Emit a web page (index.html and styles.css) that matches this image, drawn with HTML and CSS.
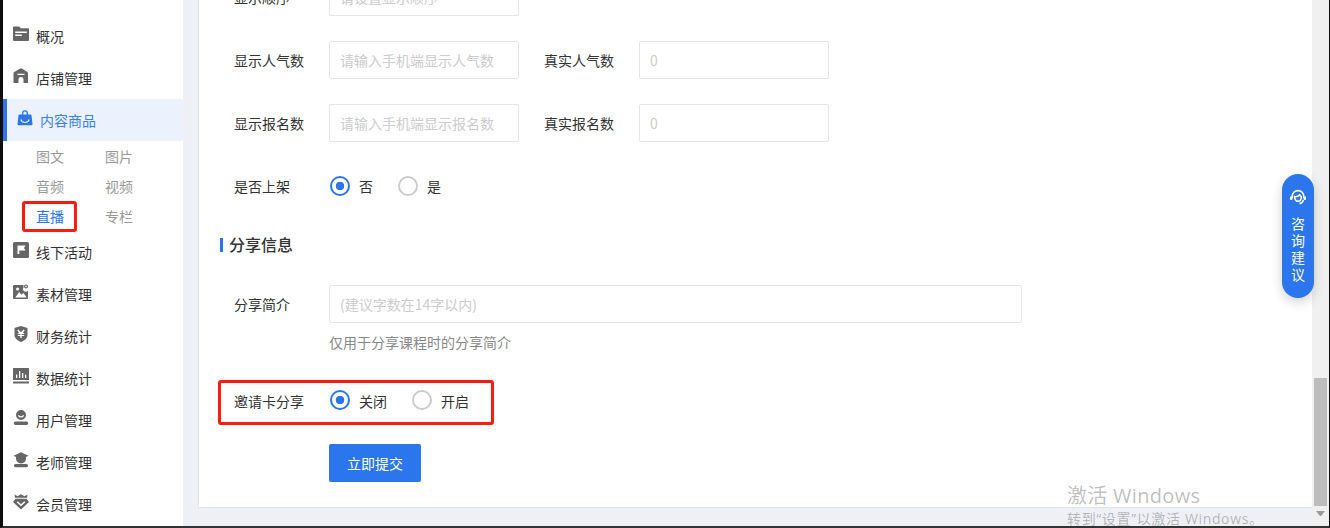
FILE: index.html
```html
<!DOCTYPE html>
<html lang="zh-CN">
<head>
<meta charset="utf-8">
<title>内容商品</title>
<link rel="stylesheet" href="styles.css">
</head>
<body>
<div class="shell">
  <nav class="sidebar">
    <a class="nav-item"><svg class="icon" viewBox="0 0 16 16"><path fill-rule="evenodd" d="M0 1.500A1 1 0 0 1 1 .5h5.200l1.600 1.800H15a1 1 0 0 1 1 1V14a1 1 0 0 1-1 1H1a1 1 0 0 1-1-1zM2.200 5.600v1.500h11.600V5.600zM2.200 8.600v1.500h6.600V8.600z"/></svg><span>概况</span></a>
    <a class="nav-item"><svg class="icon" viewBox="0 0 16 16"><path fill-rule="evenodd" d="M8 .5c1 0 1.700.5 2.500 1l3.800 2.600c.5.3.7.7.7 1.300V15h-4.500v-3.500a2.500 2.500 0 0 0-5 0V15H.5V5.400c0-.6.2-1 .7-1.300L5.500 1.500c.8-.5 1.500-1 2.500-1zM4.500 5.800v1.100h7V5.800z"/></svg><span>店铺管理</span></a>
    <a class="nav-item nav-active"><svg class="icon" viewBox="0 0 16 16"><path fill-rule="evenodd" d="M5 4.500V3.200a3 3 0 0 1 6 0v1.300h2.600c.5 0 .8.3.9.8l1 8.800c.1.6-.3 1.100-.9 1.100H1.400c-.6 0-1-.5-.9-1.100l1-8.800c.1-.5.4-.8.9-.8zM6.300 4.500h3.400V3.200a1.700 1.700 0 0 0-3.400 0zM4.400 9.300l-1.100.5a5 5 0 0 0 9.400 0l-1.100-.5a3.800 3.800 0 0 1-7.200 0z"/></svg><span>内容商品</span></a>
    <div class="sub-grid">
      <a class="sub-item">图文</a>
      <a class="sub-item">图片</a>
      <a class="sub-item">音频</a>
      <a class="sub-item">视频</a>
      <a class="sub-item sub-active">直播</a>
      <a class="sub-item">专栏</a>
    </div>
    <a class="nav-item"><svg class="icon" viewBox="0 0 16 16"><path fill-rule="evenodd" d="M1.500 0h13A1.500 1.500 0 0 1 16 1.500v13a1.500 1.500 0 0 1-1.500 1.500h-13A1.500 1.500 0 0 1 0 14.500v-13A1.500 1.500 0 0 1 1.500 0zM4.500 3.500V12H6.300V8.500h6.200l-1.500-2.500 1.500-2.500z"/></svg><span>线下活动</span></a>
    <a class="nav-item"><svg class="icon" viewBox="0 0 16 16"><path fill-rule="evenodd" d="M1 1h9.500v2.500a2.700 2.700 0 0 0 4.500 3V15H1a1 1 0 0 1-1-1V2a1 1 0 0 1 1-1zM2.200 13.500h11.500l-3.200-4.600-2.300 1.800-2-2.600zM4.600 3.400a1.500 1.500 0 1 0 0 3 1.500 1.500 0 0 0 0-3zM13 .4a2 2 0 1 1 0 4 2 2 0 0 1 0-4zm0 1.200a.8.8 0 1 0 0 1.600.8.8 0 0 0 0-1.600z"/></svg><span>素材管理</span></a>
    <a class="nav-item"><svg class="icon" viewBox="0 0 16 16"><path fill-rule="evenodd" d="M8 0l6.500 2v7.200c0 3-3 5.300-6.500 6.800-3.500-1.500-6.500-3.800-6.500-6.800V2zM5.300 3.600l-1 .6 2 2.700H4.800v1.100h2.500v1H4.800v1.100h2.500v2h1.400v-2h2.500V9h-2.500V8h2.500V6.900H9.700l2-2.700-1-.6L8 6.200z"/></svg><span>财务统计</span></a>
    <a class="nav-item"><svg class="icon" viewBox="0 0 16 16"><path fill-rule="evenodd" d="M.5 0h15a.5.5 0 0 1 .5.5V12H0V.5A.5.5 0 0 1 .5 0zM3 6.500V10h1.300V6.500zM6 3v7h1.300V3zM9 5v5h1.300V5zM12 6.800V10h1.300V6.800zM0 13.400h16V15.500H0z"/></svg><span>数据统计</span></a>
    <a class="nav-item"><svg class="icon" viewBox="0 0 16 16"><path fill-rule="evenodd" d="M8 0a5 5 0 1 1 0 10A5 5 0 0 1 8 0zM4.900 5.400a3.300 3.300 0 0 0 6.200 0l-1-.4a2.300 2.300 0 0 1-4.200 0zM2.500 11.500h11a1.700 1.700 0 0 1 0 3.500h-11a1.700 1.700 0 0 1 0-3.500z"/></svg><span>用户管理</span></a>
    <a class="nav-item"><svg class="icon" viewBox="0 0 16 16"><path d="M8 .2l7.500 3.500L13 5v1.500a5 5 0 0 1-10 0V5L.5 3.700zM2.500 12h11a1.500 1.500 0 0 1 0 3.200h-11a1.500 1.500 0 0 1 0-3.200z"/></svg><span>老师管理</span></a>
    <a class="nav-item"><svg class="icon" viewBox="0 0 16 16"><path fill-rule="evenodd" d="M1.500.5l3 1.800L8 .3l3.500 2 3-1.800-.4 3.200H1.900zM2.500 4.700h11L16 8l-8 7.500L0 8zM4.700 7.200l-1 1 4.300 4 4.300-4-1-1L8 10.300z"/></svg><span>会员管理</span></a>
  </nav>
  <div class="gutter"></div>
  <div class="main-col">
    <main class="panel">
      <form class="form">
        <div class="row">
          <label class="label">显示顺序</label>
          <input class="field" type="text" placeholder="请设置显示顺序">
        </div>
        <div class="row">
          <label class="label">显示人气数</label>
          <input class="field" type="text" placeholder="请输入手机端显示人气数">
          <label class="label label-second">真实人气数</label>
          <input class="field" type="text" placeholder="0">
        </div>
        <div class="row">
          <label class="label">显示报名数</label>
          <input class="field" type="text" placeholder="请输入手机端显示报名数">
          <label class="label label-second">真实报名数</label>
          <input class="field" type="text" placeholder="0">
        </div>
        <div class="row row-last">
          <span class="label">是否上架</span>
          <label class="option"><input class="radio" type="radio" name="shelf" checked><span>否</span></label>
          <label class="option"><input class="radio" type="radio" name="shelf"><span>是</span></label>
        </div>
        <h2 class="section-title">分享信息</h2>
        <div class="row row-last">
          <label class="label">分享简介</label>
          <input class="field field-wide" type="text" placeholder="(建议字数在14字以内)">
        </div>
        <p class="hint">仅用于分享课程时的分享简介</p>
        <div class="invite">
          <span class="label">邀请卡分享</span>
          <label class="option"><input class="radio" type="radio" name="invite" checked><span>关闭</span></label>
          <label class="option"><input class="radio" type="radio" name="invite"><span>开启</span></label>
        </div>
        <button class="submit" type="button">立即提交</button>
      </form>
    </main>
    <div class="panel-foot"></div>
  </div>
  <div class="scrollbar">
    <div class="thumb"></div>
    <div class="arrow"></div>
  </div>
  <aside class="consult">
    <svg class="consult-icon" viewBox="0 0 18 18"><path d="M3.200 10.500V8.400a5.800 5.800 0 0 1 11.600 0v2.100" fill="none"/><path d="M5.600 8.600c2 .3 3.800-.3 5-1.800.7 1 1.200 1.500 1.800 1.800 0 2.500-1.300 4.800-3.400 4.800S5.600 11 5.600 8.600z" fill="none"/><path class="consult-solid" d="M1 8.500h2.200v3.500H1.800c-.6 0-.8-.4-.8-.8zM14.800 8.500H17v2.700c0 .4-.3.800-.8.800h-1.400z"/><path d="M14.500 12c-.6 2-2 3.300-4 3.600" fill="none"/></svg>
    <div class="consult-text">咨询建议</div>
  </aside>
  <div class="watermark">
    <div class="watermark-title">激活 Windows</div>
    <div class="watermark-sub">转到“设置”以激活 Windows。</div>
  </div>
</div>
</body>
</html>
```
FILE: styles.css
```css
*,
*::before,
*::after {
  box-sizing: border-box;
}

html,
body {
  margin: 0;
  height: 100%;
  overflow: hidden;
}

body {
  font-family: "Noto Sans CJK SC", "Liberation Sans", sans-serif;
  font-size: 14px;
  color: #333;
}

.shell {
  position: relative;
  display: grid;
  grid-template-columns: 180px 15px 1fr 17px;
  height: 528px;
  border-left: 3px solid #0d0d0d;
  border-right: 1px solid #0d0d0d;
  border-bottom: 2px solid #333;
  background: #eff0f5;
  overflow: hidden;
}

/* Sidebar */
.sidebar {
  background: #fff;
  padding-top: 15px;
  overflow: hidden;
}

.nav-item {
  display: flex;
  align-items: center;
  height: 42px;
  padding-left: 10px;
  color: #333;
}

.icon {
  flex: none;
  width: 16px;
  height: 16px;
  margin: 0 7px 4px 0;
  fill: #666;
}

.nav-active {
  border-left: 4px solid #2b75ed;
  background: #ebf2fe;
  color: #3a7ff0;
}

.nav-active .icon {
  fill: #2b75ed;
}

.sub-grid {
  display: grid;
  grid-template-columns: 69px 69px;
  grid-auto-rows: 30px;
  padding-left: 33px;
  height: 90px;
}

.sub-item {
  position: relative;
  line-height: 30px;
  color: #999;
}

.sub-active {
  color: #2b75ed;
}

.sub-active::after {
  content: "";
  position: absolute;
  left: -14px;
  top: 0;
  width: 55px;
  height: 31px;
  border: 3px solid #fb1b10;
  border-radius: 3px;
}

/* Main panel */
.gutter {
  background: #eff0f5;
}

.main-col {
  display: flex;
  flex-direction: column;
  min-width: 0;
}

.panel {
  display: flex;
  flex-direction: column;
  justify-content: flex-end;
  height: 508px;
  background: #fff;
  border-left: 1px solid #e6e6e6;
  border-bottom: 1px solid #e4e4e6;
  overflow: hidden;
}

.panel-foot {
  flex: 1;
  background: #eff0f5;
}

.form {
  flex: none;
  display: flex;
  flex-direction: column;
  align-items: flex-start;
  padding-bottom: 25px;
}

.row {
  display: flex;
  align-items: center;
  height: 38px;
  margin-bottom: 25px;
  padding-left: 35px;
}

.row-last {
  margin-bottom: 0;
}

.label {
  flex: none;
  width: 95px;
  color: #333;
}

.label-second {
  margin-left: 25px;
}

.field {
  width: 190px;
  height: 38px;
  padding: 0 10px;
  border: 1px solid #e6e6e6;
  border-radius: 2px;
  background: #fff;
  font: inherit;
  color: #333;
  outline: none;
}

.field::placeholder {
  color: #ccc;
  opacity: 1;
}

.field-wide {
  width: 693px;
}

.option {
  flex: none;
  display: flex;
  align-items: center;
  margin-right: 25px;
  white-space: nowrap;
  color: #333;
}

.radio {
  appearance: none;
  flex: none;
  width: 20px;
  height: 20px;
  margin: 0 9px 0 1px;
  border: 2px solid #ccc;
  border-radius: 50%;
  background: #fff;
}

.option + .option .radio {
  margin-left: 0;
}

.radio:checked {
  border-color: #2b75ed;
  background: radial-gradient(circle, #2b75ed 0 4px, #fff 4.6px);
}

.section-title {
  position: relative;
  margin: 27px 0 29px;
  padding-left: 30px;
  font-size: 16px;
  font-weight: 500;
  line-height: 24px;
  color: #333;
}

.section-title::before {
  content: "";
  position: absolute;
  left: 21px;
  top: 6px;
  width: 3px;
  height: 14px;
  background: #2b75ed;
}

.hint {
  margin: 9px 0 0;
  padding-left: 130px;
  line-height: 20px;
  color: #888;
}

.invite {
  display: flex;
  align-items: center;
  width: 276px;
  height: 45px;
  margin: 28px 0 0 19px;
  padding: 0 0 4px 13px;
  border: 3px solid #fb1b10;
  border-radius: 3px;
}

.invite .radio {
  margin-bottom: 1px;
}

.submit {
  width: 92px;
  height: 38px;
  margin: 19px 0 0 130px;
  border: 0;
  border-radius: 2px;
  background: #2b75ed;
  font: inherit;
  color: #fff;
}

/* Scrollbar */
.scrollbar {
  display: flex;
  flex-direction: column;
  justify-content: flex-end;
  background: #f0f0f0;
}

.thumb {
  width: 13px;
  height: 128px;
  margin-left: 2px;
  background: #bdbdbd;
}

.arrow {
  width: 9px;
  height: 5px;
  margin: 5px 0 10px 4px;
  border-style: solid;
  border-width: 5px 4.5px 0;
  border-color: #999 transparent transparent;
}

/* Overlays */
.consult {
  position: absolute;
  left: 1279px;
  top: 174px;
  display: flex;
  flex-direction: column;
  align-items: center;
  width: 32px;
  height: 124px;
  padding-top: 14px;
  border-radius: 16px;
  background: #2b75ed;
  box-shadow: 0 4px 12px rgba(0, 0, 0, 0.18);
  color: #fff;
}

.consult-icon {
  width: 18px;
  height: 18px;
  stroke: #fff;
  stroke-width: 1.6;
}

.consult-solid {
  fill: #fff;
  stroke: none;
}

.consult-text {
  width: 14px;
  margin-top: 9px;
  line-height: 17px;
}

.watermark {
  position: absolute;
  left: 1064px;
  top: 482px;
  color: rgba(0, 0, 0, 0.27);
  font-family: "Open Sans", "Noto Sans CJK SC", sans-serif;
  white-space: nowrap;
}

.watermark-title {
  font-size: 20px;
  line-height: 28px;
  letter-spacing: 0.3px;
}

.watermark-sub {
  font-size: 14px;
  line-height: 18px;
  letter-spacing: 0.65px;
}
```
